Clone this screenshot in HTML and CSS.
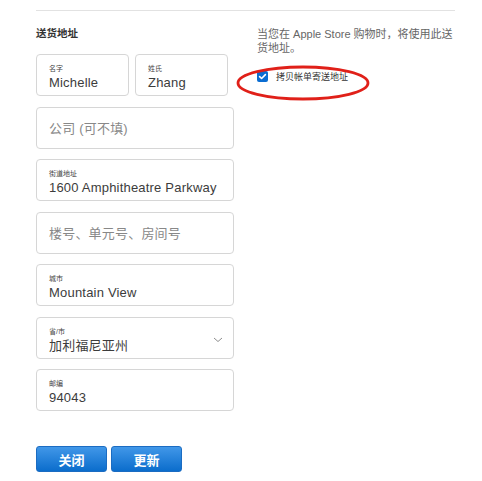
FILE: index.html
```html
<!DOCTYPE html>
<html>
<head>
    <title>送货地址</title>
    <link rel="stylesheet" href="styles.css">
</head>
<body>
    <div class="page">
        <div class="rule"></div>
        <div class="columns">
            <div class="form-col">
                <h2>送货地址</h2>
                <div class="name-row">
                    <div class="field half">
                        <span class="label">名字</span>
                        <span class="value">Michelle</span>
                    </div>
                    <div class="field half">
                        <span class="label">姓氏</span>
                        <span class="value">Zhang</span>
                    </div>
                </div>
                <div class="field empty">
                    <span class="placeholder">公司 (可不填)</span>
                </div>
                <div class="field">
                    <span class="label">街道地址</span>
                    <span class="value">1600 Amphitheatre Parkway</span>
                </div>
                <div class="field empty">
                    <span class="placeholder">楼号、单元号、房间号</span>
                </div>
                <div class="field">
                    <span class="label">城市</span>
                    <span class="value">Mountain View</span>
                </div>
                <div class="field select">
                    <span class="label">省/市</span>
                    <span class="value">加利福尼亚州</span>
                    <svg class="chevron" width="10" height="6" viewBox="0 0 10 6"><path d="M1 1 L5 4.5 L9 1" fill="none" stroke="#8e8e8e" stroke-width="1"/></svg>
                </div>
                <div class="field">
                    <span class="label">邮编</span>
                    <span class="value">94043</span>
                </div>
                <div class="buttons">
                    <button class="btn">关闭</button>
                    <button class="btn">更新</button>
                </div>
            </div>
            <div class="options">
                <p class="note">当您在 Apple Store 购物时，将使用此送货地址。</p>
                <label class="check-row">
                    <span class="checkbox">
                        <svg width="11" height="11" viewBox="0 0 11 11"><path d="M2.6 5.6 L4.6 7.5 L8.4 3.6" fill="none" stroke="#fff" stroke-width="1.6" stroke-linecap="round" stroke-linejoin="round"/></svg>
                    </span>
                    <span class="check-text">拷贝帐单寄送地址</span>
                </label>
                <!-- red hand-drawn marker around the checkbox -->
                <svg class="annot" width="138" height="40" viewBox="0 0 138 40">
                    <ellipse cx="68" cy="19" rx="65" ry="16" fill="none" stroke="#e02019" stroke-width="2.8"/>
                </svg>
            </div>
        </div>
    </div>
</body>
</html>
```

FILE: styles.css
```css
body {
    margin: 0;
    background: #fff;
    font-family: "Liberation Sans", "Noto Sans CJK SC", sans-serif;
    color: #333;
}
.page {
    width: 419px;
    margin-left: 36px;
    padding-top: 10px;
}
.rule {
    border-top: 1px solid #e2e2e2;
}
.columns {
    display: flex;
    gap: 23px;
}
.form-col {
    width: 198px;
}
h2 {
    font-size: 10.5px;
    line-height: 14px;
    font-weight: bold;
    margin: 15px 0 14px;
    color: #333;
}
.name-row {
    display: flex;
    gap: 6px;
    width: 192px;
}
.field {
    box-sizing: border-box;
    height: 42px;
    border: 1px solid #d6d6d6;
    border-radius: 4px;
    padding: 9px 12px 0;
    margin-bottom: 10.5px;
    display: flex;
    flex-direction: column;
    position: relative;
    background: #fff;
}
.field.half {
    width: 93px;
}
.label {
    font-size: 7px;
    line-height: 10px;
    color: #444;
}
.value {
    font-size: 13px;
    line-height: 17px;
    color: #3c3c3c;
    white-space: nowrap;
    letter-spacing: 0.2px;
}
.field.empty {
    padding-top: 0;
    justify-content: center;
}
.placeholder {
    font-size: 13px;
    color: #888;
    letter-spacing: 0.2px;
}
.chevron {
    position: absolute;
    right: 10px;
    top: 19px;
}
.buttons {
    display: flex;
    gap: 4px;
    margin-top: 35px;
}
.btn {
    width: 71px;
    height: 26px;
    border: 1px solid #1b6cc2;
    border-radius: 3px;
    background: linear-gradient(#4197e8, #0b6dcc);
    color: #fff;
    font-family: "Noto Sans CJK SC", sans-serif;
    font-size: 13px;
    font-weight: bold;
    padding: 0;
}
.options {
    width: 198px;
    position: relative;
}
.note {
    font-size: 11px;
    line-height: 14px;
    color: #666;
    margin: 16px 0 16px;
}
.check-row {
    display: flex;
    align-items: center;
    gap: 8px;
    height: 11px;
}
.checkbox {
    width: 11px;
    height: 11px;
    border-radius: 2px;
    background: #0a6dd2;
    display: flex;
}
.check-text {
    font-size: 9px;
    color: #333;
}
.annot {
    position: absolute;
    left: -22px;
    top: 53px;
}
```
